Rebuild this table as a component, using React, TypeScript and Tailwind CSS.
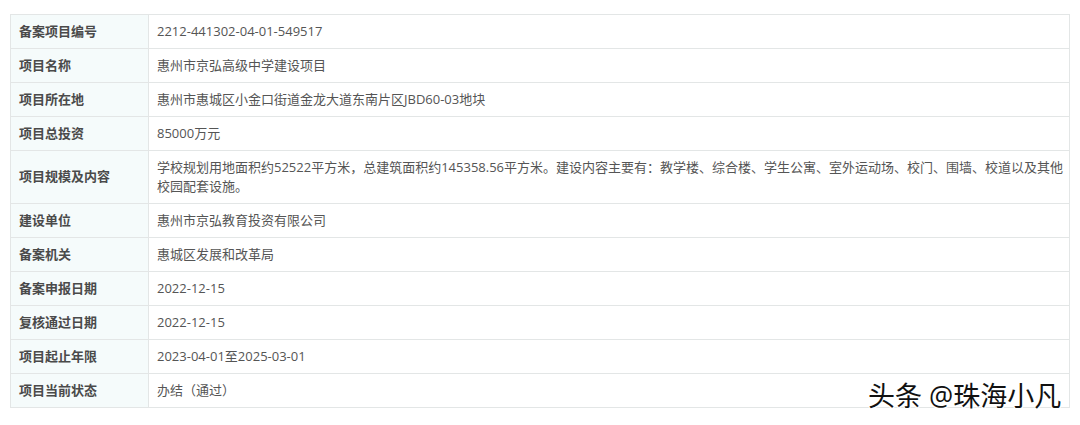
import React from 'react'

const rows: { label: string; value: React.ReactNode; tall?: boolean }[] = [
    { label: '备案项目编号', value: '2212-441302-04-01-549517' },
    { label: '项目名称', value: '惠州市京弘高级中学建设项目' },
    { label: '项目所在地', value: '惠州市惠城区小金口街道金龙大道东南片区JBD60-03地块' },
    { label: '项目总投资', value: '85000万元' },
    {
        label: '项目规模及内容',
        value: (
            <>
                学校规划用地面积约52522平方米，总建筑面积约145358.56平方米。建设内容主要有：教学楼、综合楼、学生公寓、室外运动场、校门、围墙、校道以及其他
                <br />
                校园配套设施。
            </>
        ),
        tall: true,
    },
    { label: '建设单位', value: '惠州市京弘教育投资有限公司' },
    { label: '备案机关', value: '惠城区发展和改革局' },
    { label: '备案申报日期', value: '2022-12-15' },
    { label: '复核通过日期', value: '2022-12-15' },
    { label: '项目起止年限', value: '2023-04-01至2025-03-01' },
    { label: '项目当前状态', value: '办结（通过）' },
]

export default function App() {
    return (
        <div
            className="relative h-[425px] w-[1080px] bg-white pl-[10px] pt-[14px]"
            style={{ fontFamily: '"Open Sans", "Noto Sans CJK SC", sans-serif' }}
        >
            <table className="w-[1060px] table-fixed border-collapse text-[13px]">
                <colgroup>
                    <col className="w-[138px]" />
                    <col />
                </colgroup>
                <tbody>
                    {rows.map((row) => (
                        <tr key={row.label} className={row.tall ? 'h-[53px]' : 'h-[34px]'}>
                            <td className="border border-[#e3e6e6] bg-[#f5fbfb] pl-[8px] align-middle font-bold text-[#4a4a4a]">
                                {row.label}
                            </td>
                            <td className="whitespace-nowrap border border-[#e3e6e6] pl-[8px] pr-[4px] align-middle leading-[19px] text-[#555]">
                                {row.value}
                            </td>
                        </tr>
                    ))}
                </tbody>
            </table>
            <div
                className="absolute left-[868px] top-[379px] whitespace-nowrap text-[27px] leading-[34px] text-[#111]"
                style={{ textShadow: '1px 1px 0 #fff, -1px -1px 0 #fff, 1px -1px 0 #fff, -1px 1px 0 #fff' }}
            >
                头条 @珠海小凡
            </div>
        </div>
    )
}
